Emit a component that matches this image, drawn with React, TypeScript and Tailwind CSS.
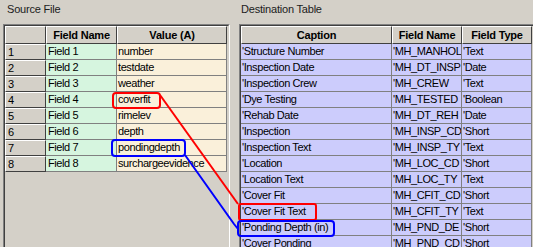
import React from 'react';

const sourceRows = [
  ['1', 'Field 1', 'number'],
  ['2', 'Field 2', 'testdate'],
  ['3', 'Field 3', 'weather'],
  ['4', 'Field 4', 'coverfit'],
  ['5', 'Field 5', 'rimelev'],
  ['6', 'Field 6', 'depth'],
  ['7', 'Field 7', 'pondingdepth'],
  ['8', 'Field 8', 'surchargeevidence'],
];

const destRows = [
  ["'Structure Number", "'MH_MANHOL", "'Text"],
  ["'Inspection Date", "'MH_DT_INSP", "'Date"],
  ["'Inspection Crew", "'MH_CREW", "'Text"],
  ["'Dye Testing", "'MH_TESTED", "'Boolean"],
  ["'Rehab Date", "'MH_DT_REH", "'Date"],
  ["'Inspection", "'MH_INSP_CD", "'Short"],
  ["'Inspection Text", "'MH_INSP_TY", "'Text"],
  ["'Location", "'MH_LOC_CD", "'Short"],
  ["'Location Text", "'MH_LOC_TY", "'Text"],
  ["'Cover Fit", "'MH_CFIT_CD", "'Short"],
  ["'Cover Fit Text", "'MH_CFIT_TY", "'Text"],
  ["'Ponding Depth (in)", "'MH_PND_DE", "'Short"],
  ["'Cover Ponding", "'MH_PND_CD", "'Short"],
];

function HeadCell({ children }: { children?: React.ReactNode }) {
  return (
    <div className="h-[18px] flex items-center justify-center bg-[#d4d0c8] border-t border-l border-t-white border-l-white border-r border-b border-r-[#404040] border-b-[#404040] font-bold tracking-[-0.2px] whitespace-nowrap overflow-hidden">
      {children}
    </div>
  );
}

function Cell({ children, bg }: { children: React.ReactNode; bg: string }) {
  return (
    <div className={`h-[16px] flex items-center pl-[1px] border-r border-b border-[#808080] whitespace-nowrap overflow-hidden ${bg}`}>
      {children}
    </div>
  );
}

function Sunken({ children, className }: { children: React.ReactNode; className: string }) {
  return (
    <div className={`border border-t-[#808080] border-l-[#808080] border-r-white border-b-white ${className}`}>
      <div className="h-full border border-t-[#404040] border-l-[#404040] border-r-[#d4d0c8] border-b-[#d4d0c8] bg-[#d4d0c8]">
        {children}
      </div>
    </div>
  );
}

export default function App() {
  return (
    <div className="relative w-[533px] h-[247px] overflow-hidden bg-[#d4d0c8] text-[11px] leading-[15px] tracking-[-0.4px] text-black font-['Liberation_Sans',Arial,sans-serif]">
      <div className="flex h-full">
        {/* source panel */}
        <div className="w-[236px] shrink-0 flex flex-col pl-[3px]">
          <div className="h-[24px] shrink-0 pl-[4px] pt-[3px] leading-[13px] tracking-[-0.2px] text-[#202020]">Source File</div>
          <Sunken className="w-[227px] h-[240px] shrink-0">
            <div className="grid grid-cols-[41px_71px_110px]">
              <HeadCell />
              <HeadCell>Field Name</HeadCell>
              <HeadCell>Value (A)</HeadCell>
              {sourceRows.map(([n, f, v]) => (
                <React.Fragment key={n}>
                  <div className="h-[16px] flex items-center pl-[2px] bg-[#d4d0c8] border-t border-l border-t-white border-l-white border-r border-b border-r-[#404040] border-b-[#404040]">
                    {n}
                  </div>
                  <Cell bg="bg-[#d6f5df] pl-[2px]">{f}</Cell>
                  <Cell bg="bg-[#faf0da]">{v}</Cell>
                </React.Fragment>
              ))}
            </div>
          </Sunken>
        </div>

        {/* destination panel */}
        <div className="flex-1 flex flex-col pl-[3px]">
          <div className="h-[24px] shrink-0 pl-[2px] pt-[3px] leading-[13px] tracking-[-0.2px] text-[#202020]">Destination Table</div>
          <Sunken className="w-[300px] h-[240px] shrink-0">
            <div className="grid grid-cols-[151px_70px_70px]">
              <HeadCell>Caption</HeadCell>
              <HeadCell>Field Name</HeadCell>
              <HeadCell>Field Type</HeadCell>
              {destRows.map(([c, f, t]) => (
                <React.Fragment key={c}>
                  <Cell bg="bg-[#ccccfc]">{c}</Cell>
                  <Cell bg="bg-[#ccccfc]">{f}</Cell>
                  <Cell bg="bg-[#ccccfc]">{t}</Cell>
                </React.Fragment>
              ))}
            </div>
          </Sunken>
        </div>
      </div>

      {/* mapping overlay */}
      <svg className="absolute inset-0 pointer-events-none" width="533" height="247" viewBox="0 0 533 247">
        <g fill="none" strokeWidth="2" strokeLinejoin="round">
          <rect x="113" y="93" width="47" height="15" rx="3" stroke="#ff0000" />
          <polyline points="160,95 238,204" stroke="#ff0000" />
          <rect x="239" y="204" width="77" height="16" rx="2" stroke="#ff0000" />
          <rect x="112" y="140" width="73" height="16" rx="3" stroke="#0000ff" />
          <polyline points="185,155 234,224 238,229" stroke="#0000ff" />
          <rect x="238" y="221" width="96" height="15" rx="3" stroke="#0000ff" />
        </g>
      </svg>
    </div>
  );
}
